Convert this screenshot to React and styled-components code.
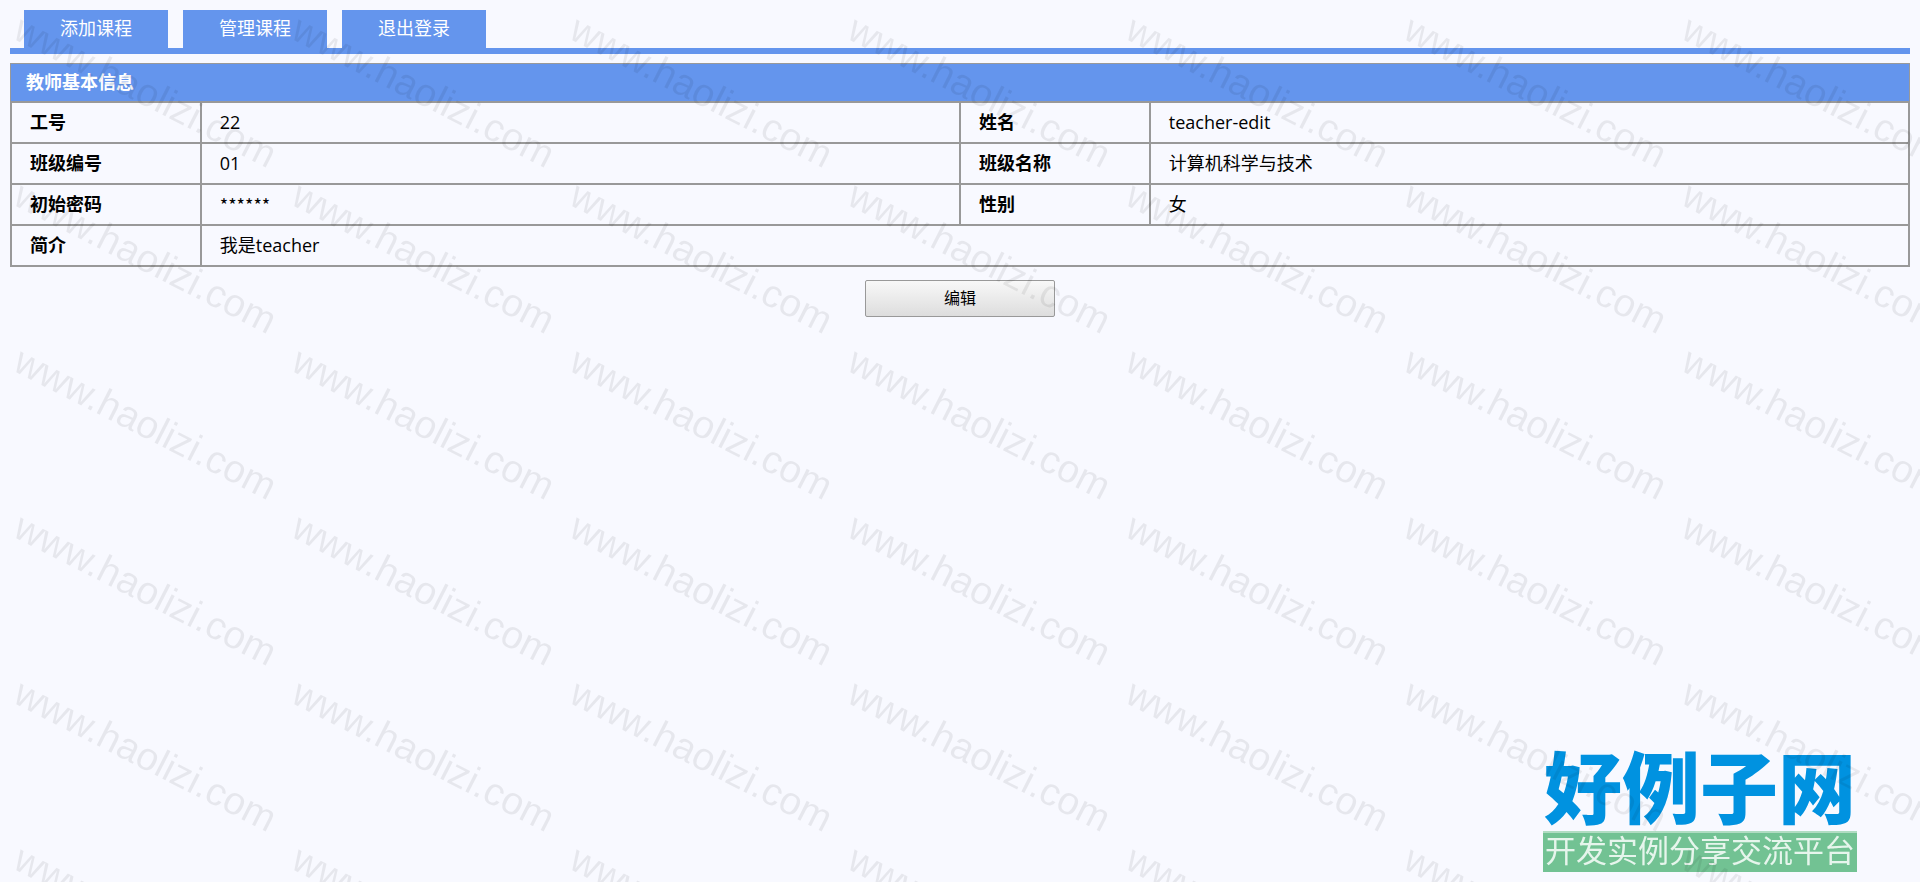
import React from 'react';
import styled, { createGlobalStyle } from 'styled-components';

const GlobalStyle = createGlobalStyle`
    body {
        margin: 10px;
        background-color: #f8f9ff;
        color: #000;
        font-family: 'Open Sans', 'Noto Sans CJK SC', sans-serif;
        font-size: 18px;
    }
`;

const NavStyle = styled.nav`
    display: flex;
    gap: 15px;
    padding-left: 14px;
    border-bottom: 6px solid #6495ed;
`;

const NavLink = styled.a`
    box-sizing: border-box;
    width: 144px;
    padding-bottom: 2px;
    line-height: 36px;
    background-color: #6495ed;
    color: white;
    text-align: center;
    text-decoration: none;
`;

const InfoTable = styled.table`
    width: 100%;
    margin-top: 9px;
    border-collapse: collapse;
    table-layout: fixed;
`;

const TableTitle = styled.caption`
    padding-left: 15px;
    border: 1px solid #999;
    border-bottom: 0;
    background-color: #6495ed;
    color: white;
    font-weight: bold;
    line-height: 37px;
    text-align: left;
`;

const CellName = styled.th`
    padding: 0 18px;
    border: 2px solid #999;
    font-weight: bold;
    line-height: 39px;
    text-align: left;
`;

const CellValue = styled.td`
    padding: 0 18px;
    border: 2px solid #999;
    font-family: ${props => props.$masked ? "'Noto Sans CJK SC', sans-serif" : 'inherit'};
    line-height: 39px;
`;

const EditButton = styled.button`
    display: block;
    width: 10%;
    height: 37px;
    margin: 13px auto 0;
    padding: 0 6px 3px;
    border: 1px solid #999;
    border-radius: 2px;
    background: linear-gradient(#f8f8f8, #dddddd);
    color: #000;
    font-family: 'Noto Sans CJK SC', sans-serif;
    font-size: 16px;
`;

const LogoStyle = styled.div`
    position: fixed;
    right: 63px;
    bottom: 10px;
    font-family: 'Noto Sans CJK SC', sans-serif;
    text-align: center;
`;

const LogoName = styled.div`
    padding-bottom: 5px;
    color: #0092e0;
    font-size: 78px;
    font-weight: 900;
    line-height: 84px;
`;

const LogoSlogan = styled.div`
    padding: 0 2px 7px;
    border-top: 2px solid #b0dcc2;
    background-color: #72c293;
    color: #e6f5ec;
    font-size: 31px;
    line-height: 32px;
`;

const WatermarkLayer = styled.div`
    position: fixed;
    inset: 0;
    display: grid;
    grid-template-columns: repeat(7, 278px);
    grid-auto-rows: 166px;
    padding: 4px 0 0 8px;
    overflow: hidden;
    pointer-events: none;
`;

const Watermark = styled.span`
    justify-self: start;
    align-self: start;
    color: rgba(0, 0, 0, 0.07);
    font-family: 'Liberation Sans', Arial, sans-serif;
    font-size: 39px;
    line-height: 40px;
    white-space: nowrap;
    transform: rotate(27deg);
    transform-origin: 0 100%;
`;

const links = ['添加课程', '管理课程', '退出登录'];

const rows = [
    [['工号', '22'], ['姓名', 'teacher-edit']],
    [['班级编号', '01'], ['班级名称', '计算机科学与技术']],
    [['初始密码', '******'], ['性别', '女']],
    [['简介', '我是teacher']],
];

const App = () => {
    const marks = Array.from({ length: 42 }, (_, i) => i);

    return ( <>
        <GlobalStyle/>
        <NavStyle>
            {links.map(link => <NavLink key={link} href="#">{link}</NavLink>)}
        </NavStyle>
        <main>
            <InfoTable>
                <TableTitle>教师基本信息</TableTitle>
                <colgroup>
                    <col width="10%"/>
                    <col width="40%"/>
                    <col width="10%"/>
                    <col width="40%"/>
                </colgroup>
                <tbody>
                    {rows.map(row => (
                        <tr key={row[0][0]}>
                            {row.map(([name, value]) => (
                                <React.Fragment key={name}>
                                    <CellName scope="row">{name}</CellName>
                                    <CellValue colSpan={row.length === 1 ? 3 : 1} $masked={value.startsWith('*')}>{value}</CellValue>
                                </React.Fragment>
                            ))}
                        </tr>
                    ))}
                </tbody>
            </InfoTable>
            <EditButton type="button">编辑</EditButton>
        </main>
        <LogoStyle>
            <LogoName>好例子网</LogoName>
            <LogoSlogan>开发实例分享交流平台</LogoSlogan>
        </LogoStyle>
        <WatermarkLayer aria-hidden="true">
            {marks.map(i => <Watermark key={i}>www.haolizi.com</Watermark>)}
        </WatermarkLayer>
    </> );
}

export default App;
